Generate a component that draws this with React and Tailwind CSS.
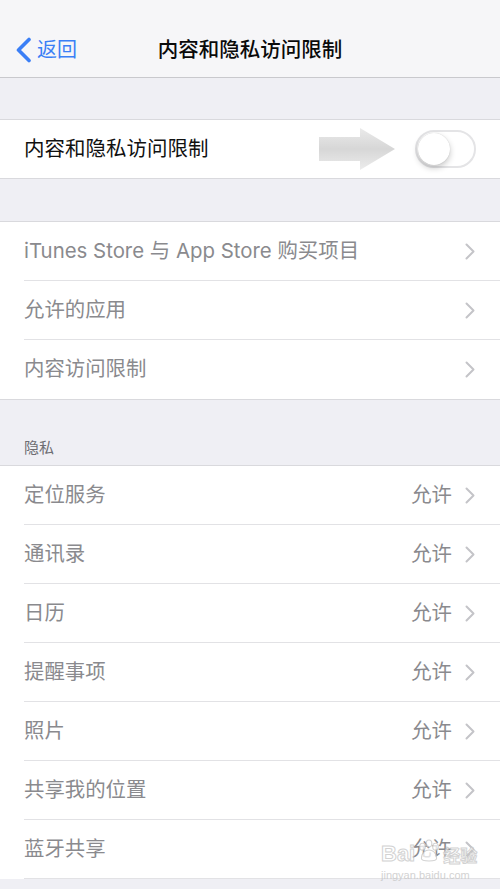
import React from 'react';

const FONT = { fontFamily: '"Inter", "Noto Sans CJK SC", sans-serif' };

const Chevron = () => (
  <svg width="10" height="17" viewBox="0 0 10 17" className="shrink-0">
    <polyline points="1.5,1.5 8.5,8.5 1.5,15.5" fill="none" stroke="#c4c4c8" strokeWidth="2" strokeLinecap="round" strokeLinejoin="round" />
  </svg>
);

const restrictRows = ['iTunes Store 与 App Store 购买项目', '允许的应用', '内容访问限制'];
const privacyRows = ['定位服务', '通讯录', '日历', '提醒事项', '照片', '共享我的位置', '蓝牙共享'];

function Row({ label, value, last }) {
  return (
    <div className="pl-6 bg-white">
      <div className={`h-[59px] flex items-center pr-[25px] ${last ? '' : 'border-b border-[#e2e2e5]'}`}>
        <span className="flex-1 text-[20.4px] text-[#8a8a8e]">{label}</span>
        {value && <span className="text-[20.4px] text-[#8a8a8e] mr-[13px]">{value}</span>}
        <Chevron />
      </div>
    </div>
  );
}

export default function App() {
  return (
    <div className="w-[500px] h-[889px] overflow-hidden bg-[#efeff4] relative" style={FONT}>
      {/* Nav bar */}
      <div className="h-[78px] bg-[#f6f6f8] border-b border-[#c9c9cd] relative flex items-end pb-[13px]">
        <div className="flex items-center pl-[15px] h-[28px]">
          <svg width="17" height="26" viewBox="0 0 17 26">
            <polyline points="14,2.5 3.5,13 14,23.5" fill="none" stroke="#3b7ff6" strokeWidth="3.6" strokeLinecap="round" strokeLinejoin="round" />
          </svg>
          <span className="ml-[5px] text-[20px] text-[#3b7ff6]">返回</span>
        </div>
        <div className="absolute left-0 right-0 bottom-[13px] h-[28px] flex items-center justify-center">
          <span className="text-[20.5px] font-medium text-[#0a0a0a]">内容和隐私访问限制</span>
        </div>
      </div>

      <div className="h-[41px]" />

      {/* Toggle row */}
      <div className="bg-white border-y border-[#d9d9dd] h-[60px] flex items-center pl-6 pr-[24px]">
        <span className="flex-1 text-[20.5px] text-[#111]">内容和隐私访问限制</span>
        <svg width="78" height="42" viewBox="0 0 78 42" className="mr-[18px]">
          <defs>
            <linearGradient id="arr" x1="0" y1="0" x2="0" y2="1">
              <stop offset="0" stopColor="#e8e8e8" />
              <stop offset="0.5" stopColor="#d2d2d2" />
              <stop offset="1" stopColor="#eaeaea" />
            </linearGradient>
          </defs>
          <polygon points="0,9 41,9 41,0 76,21 41,42 41,33 0,33" fill="url(#arr)" opacity="0.9" />
        </svg>
        <div className="w-[61px] h-[38px] rounded-full border-[2px] border-[#e4e4e6] bg-white relative">
          <div className="absolute left-[1px] top-[1px] w-[32px] h-[32px] rounded-full bg-white shadow-[0_3px_6px_rgba(0,0,0,0.22),0_0_1px_rgba(0,0,0,0.2)]" />
        </div>
      </div>

      <div className="h-[42px]" />

      {/* Restrictions group */}
      <div className="border-y border-[#d9d9dd]">
        {restrictRows.map((r, i) => (
          <Row key={r} label={r} last={i === restrictRows.length - 1} />
        ))}
      </div>

      {/* Privacy header */}
      <div className="h-[65px] flex items-end pl-6 pb-[6px]">
        <span className="text-[15px] text-[#6d6d72]">隐私</span>
      </div>

      <div className="border-t border-[#d9d9dd]">
        {privacyRows.map((r) => (
          <Row key={r} label={r} value="允许" />
        ))}
      </div>

      {/* watermark */}
      <div className="absolute left-[381px] top-[838px] flex flex-col items-start opacity-75 pointer-events-none">
        <div className="flex items-end leading-none">
          <span className="text-[22px] font-bold text-white [-webkit-text-stroke:1px_#c4c4c4]" style={{ fontFamily: '"Liberation Sans", sans-serif' }}>Bai</span>
          <svg width="28" height="26" viewBox="0 0 24 24" className="mb-[1px]">
            <g fill="white" stroke="#c4c4c4" strokeWidth="1">
              <ellipse cx="6" cy="8" rx="2.6" ry="3.2" />
              <ellipse cx="12" cy="5" rx="2.6" ry="3.2" />
              <ellipse cx="18" cy="8" rx="2.6" ry="3.2" />
              <path d="M5 19 C5 13 9 11 12 11 C15 11 19 13 19 19 C19 22 5 22 5 19 Z" />
            </g>
          </svg>
          <span className="text-[17px] font-bold text-white [-webkit-text-stroke:1px_#c4c4c4]">经验</span>
        </div>
        <span className="text-[11px] text-[#c4c4c4] mt-[2px]" style={{ fontFamily: '"Liberation Sans", sans-serif' }}>jingyan.baidu.com</span>
      </div>
    </div>
  );
}
